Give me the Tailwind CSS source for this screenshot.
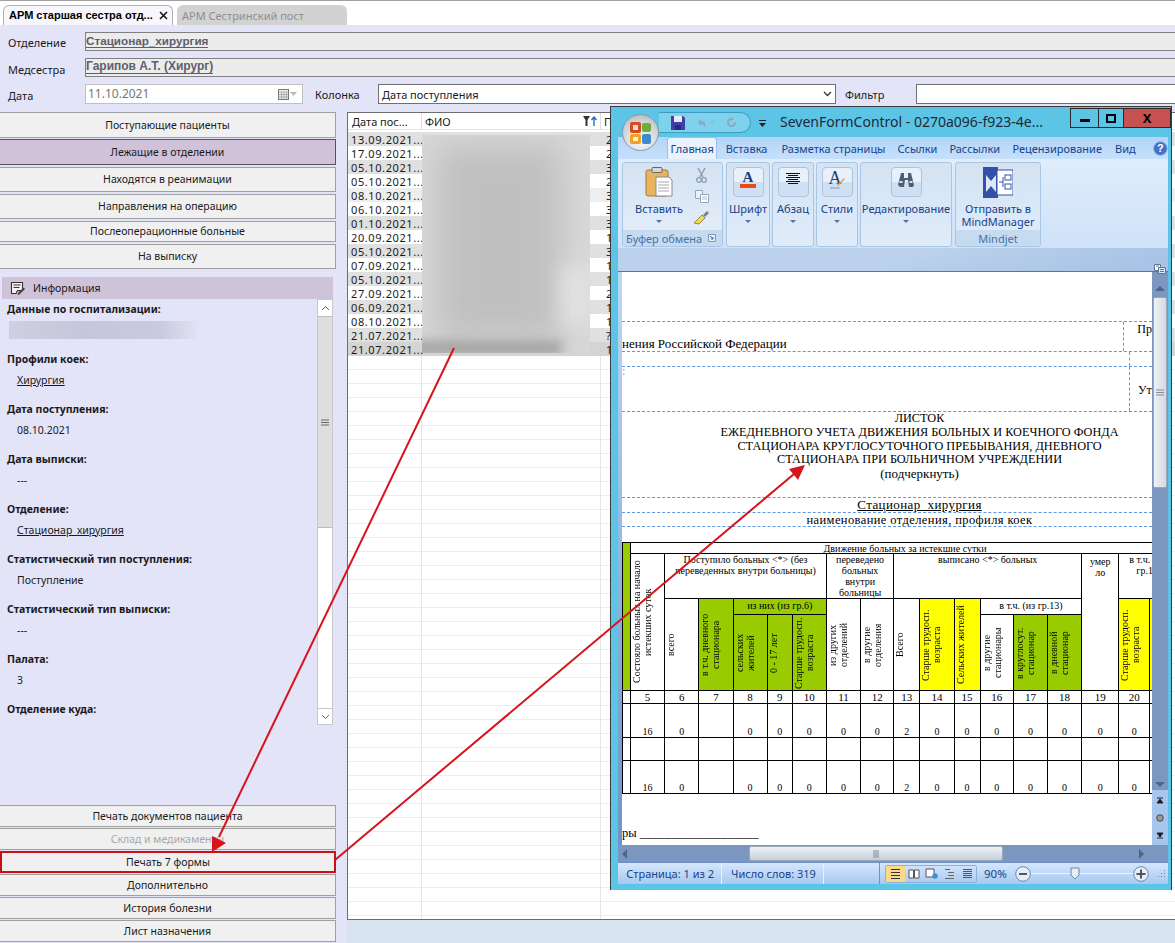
<!DOCTYPE html>
<html lang="ru"><head><meta charset="utf-8">
<script src="https://cdn.jsdelivr.net/npm/@tailwindcss/browser@4"></script>
<title>АРМ</title></head>
<body class="m-0">
<div class="relative flex h-[943px] w-[1175px] flex-col overflow-hidden bg-[#e4e4f8] font-['Noto_Sans',sans-serif] text-[11px] leading-none text-[#1a1a1a]">

  <!-- Tabs -->
  <div class="flex h-[25px] items-end gap-[4px] border-t border-[#a0a0a0] bg-white pl-[3px]">
    <div class="flex h-[20px] w-[170px] items-center whitespace-nowrap rounded-t-[6px] border border-b-0 border-[#b0b0b0] bg-[#f6f6fc] pl-[5px] font-['Liberation_Sans',sans-serif] text-[11px] font-bold text-black"><span class="w-[150px]">АРМ старшая сестра отд...</span><svg width="9" height="9" viewBox="0 0 9 9"><path d="M1 1l7 7M8 1l-7 7" stroke="#111" stroke-width="1.500"/></svg></div>
    <div class="flex h-[20px] w-[170px] items-center rounded-t-[6px] bg-[#d2d2d2] pl-[5px] text-[#8f8f8f]">АРМ Сестринский пост</div>
  </div>

  <!-- Fields -->
  <div class="flex flex-col gap-[7px] pt-[7px]">
    <div class="flex h-[19px] items-stretch">
      <div class="flex w-[85px] items-center pl-[8px] pt-[2px]">Отделение</div>
      <div class="flex-1 border border-r-0 border-[#808080] bg-[#ececec] font-['Liberation_Sans',sans-serif] text-[11.700px] font-bold text-[#5e5e6e]"><span class="border-b border-[#5e5e6e] leading-[15px]">Стационар_хирургия</span></div>
    </div>
    <div class="flex h-[19px] items-stretch">
      <div class="flex w-[85px] items-center pl-[8px] pt-[3px]">Медсестра</div>
      <div class="flex-1 border border-r-0 border-[#808080] bg-[#ececec] font-['Liberation_Sans',sans-serif] text-[12px] font-bold text-[#5e5e6e]"><span class="border-b border-[#5e5e6e] leading-[15px]">Гарипов А.Т. (Хирург)</span></div>
    </div>
    <div class="flex h-[20px] items-center">
      <div class="w-[85px] pl-[8px] pt-[2px]">Дата</div>
      <div class="flex h-[20px] w-[218px] items-center justify-between border border-[#c0c0c0] bg-white pl-[2px] pr-[5px] text-[12px] text-[#777]">11.10.2021
        <span class="flex items-center gap-[1px]"><svg width="11" height="11" viewBox="0 0 11 11"><rect x=".5" y=".5" width="10" height="10" fill="#eee" stroke="#777"/><path d="M1 3h9M3.500 3v7M6 3v7M8.500 3v7M1 5.500h9M1 8h9" stroke="#999" stroke-width=".7"/></svg><svg width="7" height="4" viewBox="0 0 7 4"><path d="M0 0h7L3.500 4z" fill="#bbb"/></svg></span>
      </div>
      <div class="w-[75px] pl-[12px]">Колонка</div>
      <div class="flex h-[20px] w-[458px] items-center justify-between border border-[#707070] bg-white pl-[3px] pr-[3px]">Дата поступления<svg width="9" height="6" viewBox="0 0 9 6"><path d="M1 1l3.500 3.500L8 1" fill="none" stroke="#333" stroke-width="1.300"/></svg></div>
      <div class="w-[80px] pl-[9px]">Фильтр</div>
      <div class="h-[20px] flex-1 border border-r-0 border-[#707070] bg-white"></div>
    </div>
  </div>

  <!-- Body -->
  <div class="mt-[8px] flex min-h-0 flex-1">
    <!-- Left column -->
    <div class="flex w-[336px] flex-col text-[10.500px]">
      <div class="flex h-[26px] items-center justify-center border border-l-0 border-[#a0a0a0] bg-[#f0f0f0]">Поступающие пациенты</div>
      <div class="mt-[1px] flex h-[26px] items-center justify-center border border-l-0 border-[#555] bg-[#cfc2d9]">Лежащие в отделении</div>
      <div class="mt-[2px] flex h-[25px] items-center justify-center border border-l-0 border-[#a0a0a0] bg-[#f0f0f0]">Находятся в реанимации</div>
      <div class="mt-[2px] flex h-[25px] items-center justify-center border border-l-0 border-[#a0a0a0] bg-[#f0f0f0]">Направления на операцию</div>
      <div class="mt-[2px] flex h-[21px] items-center justify-center border border-l-0 border-[#a0a0a0] bg-[#f0f0f0]">Послеоперационные больные</div>
      <div class="mt-[2px] flex h-[25px] items-center justify-center border border-l-0 border-[#a0a0a0] bg-[#f0f0f0]">На выписку</div>

      <div class="ml-[2px] mr-[3px] mt-[8px] flex h-[22px] items-center bg-[#cfc3da] pl-[8px]">
        <svg width="16" height="16" viewBox="0 0 16 16"><path d="M1.500 2.500h11v8h-5l-1.500 3h-4.500z" fill="#f4f2f7" stroke="#333" stroke-width="1.100"/><path d="M3.500 5h7M3.500 7.500h6" stroke="#333"/><path d="M8 13l5.500-5.500 1.500 1.500L9.500 14.500 7.500 15z" fill="#444"/></svg>
        <span class="ml-[7px]">Информация</span>
      </div>

      <div class="ml-[2px] mr-[3px] flex h-[506px]">
        <div class="flex-1 pl-[5px]">
          <div class="h-[50px]"><div class="flex h-[20px] items-center font-bold">Данные по госпитализации:</div><div class="mt-[2px] h-[18px] w-[191px] overflow-hidden pl-[2px]"><div class="h-full bg-[linear-gradient(90deg,#cfcfe2,#c6c6da_40%,#cacade_80%,#e2e2f5)]"></div></div></div>
          <div class="h-[50px]"><div class="flex h-[20px] items-center font-bold">Профили коек:</div><div class="mt-[1px] flex h-[20px] items-center pl-[10px] underline">Хирургия</div></div>
          <div class="h-[50px]"><div class="flex h-[20px] items-center font-bold">Дата поступления:</div><div class="mt-[1px] flex h-[20px] items-center pl-[10px]">08.10.2021</div></div>
          <div class="h-[50px]"><div class="flex h-[20px] items-center font-bold">Дата выписки:</div><div class="mt-[1px] flex h-[20px] items-center pl-[10px]">---</div></div>
          <div class="h-[50px]"><div class="flex h-[20px] items-center font-bold">Отделение:</div><div class="mt-[1px] flex h-[20px] items-center pl-[10px] underline">Стационар_хирургия</div></div>
          <div class="h-[50px]"><div class="flex h-[20px] items-center font-bold">Статистический тип поступления:</div><div class="mt-[1px] flex h-[20px] items-center pl-[10px]">Поступление</div></div>
          <div class="h-[50px]"><div class="flex h-[20px] items-center font-bold">Статистический тип выписки:</div><div class="mt-[1px] flex h-[20px] items-center pl-[10px]">---</div></div>
          <div class="h-[50px]"><div class="flex h-[20px] items-center font-bold">Палата:</div><div class="mt-[1px] flex h-[20px] items-center pl-[10px]">3</div></div>
          <div class="h-[50px]"><div class="flex h-[20px] items-center font-bold">Отделение куда:</div></div>
        </div>
        <div class="flex h-[426px] w-[16px] flex-col border border-[#c8c8c8] bg-white">
          <div class="flex h-[16px] items-center justify-center"><svg width="9" height="6" viewBox="0 0 9 6"><path d="M1 5l3.500-3.500L8 5" fill="none" stroke="#666"/></svg></div>
          <div class="flex h-[212px] items-center justify-center border-y border-[#bbb] bg-[#dedede]"><svg width="8" height="7" viewBox="0 0 8 7"><path d="M0 1h8M0 3.500h8M0 6h8" stroke="#666"/></svg></div>
          <div class="flex-1"></div>
          <div class="flex h-[16px] items-center justify-center border-t border-[#c8c8c8]"><svg width="9" height="6" viewBox="0 0 9 6"><path d="M1 1l3.500 3.500L8 1" fill="none" stroke="#666"/></svg></div>
        </div>
      </div>

      <div class="flex h-[22px] items-center justify-center border border-l-0 border-[#a0a0a0] bg-[#f0f0f0]">Печать документов пациента</div>
      <div class="mt-[1px] flex h-[22px] items-center justify-center border border-l-0 border-[#a0a0a0] bg-[#f0f0f0] text-[#a8a8a8]">Склад и медикаменты</div>
      <div class="mt-[1px] flex h-[22px] items-center justify-center border-[2px] border-[#cc0f14] bg-[#f0f0f0]">Печать 7 формы</div>
      <div class="mt-[1px] flex h-[22px] items-center justify-center border border-l-0 border-[#a0a0a0] bg-[#f0f0f0]">Дополнительно</div>
      <div class="mt-[1px] flex h-[22px] items-center justify-center border border-l-0 border-[#a0a0a0] bg-[#f0f0f0]">История болезни</div>
      <div class="mt-[1px] flex h-[22px] items-center justify-center border border-l-0 border-[#a0a0a0] bg-[#f0f0f0]">Лист назначения</div>
    </div>

    <!-- Right column -->
    <div class="ml-[11px] flex min-w-0 flex-1 flex-col">
      <div class="relative h-[808px] overflow-hidden border border-r-0 border-[#6e6e6e] bg-white">
        <div class="flex h-[17px] items-center border-b border-[#e6e6e6]">
          <div class="flex h-full w-[74px] items-center border-r border-[#ddd] pl-[4px]">Дата пос...</div>
          <div class="flex h-full w-[179px] items-center justify-between border-r border-[#ddd] pl-[3px] pr-[2px]">ФИО<svg width="15" height="10" viewBox="0 0 15 10"><path d="M0 0h7L4.500 4v6h-2V4z" fill="#333"/><path d="M11 10V1.500M8.500 4L11 1l2.500 3" fill="none" stroke="#2a6fb8" stroke-width="1.400"/></svg></div>
          <div class="pl-[3px]">П</div>
        </div>
        <div class="mt-[2px] flex h-[14px] items-center bg-[#e0e0e0]"><div class="w-[74px] pl-[3px] tracking-[0.6px]">13.09.2021...</div><div class="w-[179px]"></div><div class="pl-[5px]">2</div></div>
        <div class="flex h-[14px] items-center"><div class="w-[74px] pl-[3px] tracking-[0.6px]">17.09.2021...</div><div class="w-[179px]"></div><div class="pl-[5px]">2</div></div>
        <div class="flex h-[14px] items-center bg-[#e0e0e0]"><div class="w-[74px] pl-[3px] tracking-[0.6px]">05.10.2021...</div><div class="w-[179px]"></div><div class="pl-[5px]">3</div></div>
        <div class="flex h-[14px] items-center"><div class="w-[74px] pl-[3px] tracking-[0.6px]">05.10.2021...</div><div class="w-[179px]"></div><div class="pl-[5px]">2</div></div>
        <div class="flex h-[14px] items-center bg-[#eeeeee]"><div class="w-[74px] pl-[3px] tracking-[0.6px]">08.10.2021...</div><div class="w-[179px]"></div><div class="pl-[5px]">3</div></div>
        <div class="flex h-[14px] items-center"><div class="w-[74px] pl-[3px] tracking-[0.6px]">06.10.2021...</div><div class="w-[179px]"></div><div class="pl-[5px]">3</div></div>
        <div class="flex h-[14px] items-center bg-[#e0e0e0]"><div class="w-[74px] pl-[3px] tracking-[0.6px]">01.10.2021...</div><div class="w-[179px]"></div><div class="pl-[5px]">3</div></div>
        <div class="flex h-[14px] items-center"><div class="w-[74px] pl-[3px] tracking-[0.6px]">20.09.2021...</div><div class="w-[179px]"></div><div class="pl-[5px]">1</div></div>
        <div class="flex h-[14px] items-center bg-[#e0e0e0]"><div class="w-[74px] pl-[3px] tracking-[0.6px]">05.10.2021...</div><div class="w-[179px]"></div><div class="pl-[5px]">3</div></div>
        <div class="flex h-[14px] items-center"><div class="w-[74px] pl-[3px] tracking-[0.6px]">07.09.2021...</div><div class="w-[179px]"></div><div class="pl-[5px]">1</div></div>
        <div class="flex h-[14px] items-center bg-[#e0e0e0]"><div class="w-[74px] pl-[3px] tracking-[0.6px]">05.10.2021...</div><div class="w-[179px]"></div><div class="pl-[5px]">1</div></div>
        <div class="flex h-[14px] items-center"><div class="w-[74px] pl-[3px] tracking-[0.6px]">27.09.2021...</div><div class="w-[179px]"></div><div class="pl-[5px]">2</div></div>
        <div class="flex h-[14px] items-center bg-[#e0e0e0]"><div class="w-[74px] pl-[3px] tracking-[0.6px]">06.09.2021...</div><div class="w-[179px]"></div><div class="pl-[5px]">1</div></div>
        <div class="flex h-[14px] items-center"><div class="w-[74px] pl-[3px] tracking-[0.6px]">08.10.2021...</div><div class="w-[179px]"></div><div class="pl-[5px]">1</div></div>
        <div class="flex h-[14px] items-center bg-[#e0e0e0]"><div class="w-[74px] pl-[3px] tracking-[0.6px]">21.07.2021...</div><div class="w-[179px]"></div><div class="pl-[5px]">?</div></div>
        <div class="flex h-[14px] items-center bg-[#d4d4d4]"><div class="w-[74px] pl-[3px] tracking-[0.6px]">21.07.2021...</div><div class="w-[179px]"></div><div class="pl-[5px]">1</div></div>
        <!-- empty rows -->
        <div class="flex h-[570px] bg-[repeating-linear-gradient(180deg,#ffffff_0,#ffffff_13px,#ececec_13px,#ececec_14px)]"><div class="w-[74px] border-r border-[#e6e6e6]"></div><div class="w-[179px] border-r border-[#e6e6e6]"></div></div>

        <!-- blurred names (redacted in the reference) -->
        <div class="absolute left-[74px] top-[22px] h-[218px] w-[168px] overflow-hidden bg-[#d8d8d8]">
          <div class="absolute left-[15px] top-[10px] h-[195px] w-[125px] bg-[#c0c0c0] blur-[16px]"></div>
          <div class="absolute left-[140px] top-[130px] h-[60px] w-[30px] bg-[#e2e2e2] blur-[10px]"></div>
          <div class="absolute left-[-10px] top-[206px] h-[14px] w-[150px] bg-[#a0a0a0] blur-[6px]"></div>
        </div>
      </div>
      <div class="flex-1 bg-[#d8e4f0]"></div>
    </div>
  </div>

  <!-- Word window -->
  <div class="absolute left-[610px] top-[106px] flex h-[784px] w-[562px] flex-col border border-b-0 border-[#3a3a3a] bg-[#5cc5e6]">
    <!-- title -->
    <div class="flex h-[30px] items-start">
      <div class="ml-[48px] mt-[5px] flex h-[21px] w-[92px] items-center rounded-r-[11px] border border-l-0 border-[#3f9dc4] bg-[#7fd2ec] pl-[12px]">
        <svg width="14" height="14" viewBox="0 0 14 14"><path d="M0 0h12l2 2v12H0z" fill="#3f3fa6"/><rect x="3" y="0" width="8" height="6" fill="#e8e8f8"/><rect x="4" y="9" width="6" height="5" fill="#2b2b70"/></svg>
        <svg class="ml-[10px]" width="12" height="12" viewBox="0 0 12 12"><path d="M3 5l3-3v2c4 0 5 3 4 7-1-3-2-4-4-4v2z" fill="#8aa8c0"/></svg>
        <svg class="ml-[3px]" width="5" height="3" viewBox="0 0 5 3"><path d="M0 0h5L2.500 3z" fill="#9ab8cc"/></svg>
        <svg class="ml-[11px]" width="11" height="11" viewBox="0 0 11 11"><path d="M9 5.500A3.500 3.500 0 1 1 5.500 2" fill="none" stroke="#8aa8c0" stroke-width="2"/><path d="M5 0l3 2-3 2z" fill="#8aa8c0"/></svg>
      </div>
      <svg class="ml-[8px] mt-[13px]" width="7" height="7" viewBox="0 0 7 7"><path d="M0 0h7v1H0zM0 3h7L3.500 7z" fill="#222"/></svg>
      <div class="ml-[14px] mt-[5px] w-[285px] whitespace-nowrap text-[14px] leading-[20px] text-[#1c2a38]">SevenFormControl - 0270a096-f923-4e...</div>
      <div class="ml-auto mr-[0px] mt-[1px] flex h-[20px] border border-[#2a2a2a]">
        <div class="flex w-[28px] items-center justify-center border-r border-[#2a2a2a]"><div class="mt-[5px] h-[3px] w-[10px] bg-black"></div></div>
        <div class="flex w-[25px] items-center justify-center border-r border-[#2a2a2a]"><div class="h-[9px] w-[10px] border-[2px] border-black"></div></div>
        <div class="flex w-[46px] items-center justify-center bg-[#c75050] text-[13px] font-bold text-black">X</div>
      </div>
    </div>
    <!-- ribbon tabs -->
    <div class="ml-[7px] mr-[3px] flex h-[22px] items-center bg-[linear-gradient(180deg,#b3d5f8,#c6e0fb)] text-[#15428b]">
      <div class="ml-[49px] flex h-[22px] w-[51px] items-center justify-center rounded-t-[3px] border border-b-0 border-[#9cc0e8] bg-[#eaf3fd]">Главная</div>
      <div class="flex w-[59px] justify-center">Вставка</div>
      <div class="w-[117px] text-center">Разметка страницы</div>
      <div class="w-[53px] text-center">Ссылки</div>
      <div class="w-[63px] text-center">Рассылки</div>
      <div class="w-[104px] text-center">Рецензирование</div>
      <div class="w-[34px] text-center">Вид</div>
      <svg class="ml-[11px]" width="15" height="15" viewBox="0 0 15 15"><circle cx="7.500" cy="7.500" r="7" fill="#3f73c4" stroke="#9fc0ea"/><text x="7.500" y="11.500" text-anchor="middle" font-size="11" font-weight="700" fill="#fff" font-family="Liberation Sans">?</text></svg>
    </div>
    <!-- ribbon -->
    <div class="ml-[7px] mr-[3px] flex h-[89px] gap-[2px] bg-[linear-gradient(180deg,#dfedfc,#cfe2f8)] px-[4px] pb-[1px] pt-[3px] text-[#15428b]">
      <div class="relative mr-[1px] flex w-[101px] flex-col overflow-hidden rounded-[3px] border border-[#a9c6e4] bg-[linear-gradient(180deg,#d4e2f2,#e6effa)]">
        <div class="flex flex-1">
          <div class="flex w-[70px] flex-col items-center pl-[2px] pt-[4px]">
            <svg width="28" height="30" viewBox="0 0 28 30"><rect x="1" y="3" width="22" height="26" rx="2" fill="#e9b45f" stroke="#a6793a"/><rect x="7" y="0.500" width="10" height="5" rx="1" fill="#d8d8d8" stroke="#666"/><path d="M11 10h13l3 3v16H11z" fill="#fff" stroke="#8a8a8a"/><path d="M13 15h11M13 18h11M13 21h11M13 24h11" stroke="#aaa"/></svg>
            <div class="mt-[6px]">Вставить</div>
            <svg class="mt-[6px]" width="6" height="3" viewBox="0 0 6 3"><path d="M0 0h6L3 3z" fill="#5573a0"/></svg>
          </div>
          <div class="flex flex-col items-center gap-[7px] pt-[5px]">
            <svg width="11" height="15" viewBox="0 0 11 15"><path d="M2 0l5 9M9 0L4 9" stroke="#8f9fb2" stroke-width="1.500"/><circle cx="3" cy="12" r="2.300" fill="none" stroke="#8f9fb2" stroke-width="1.300"/><circle cx="8" cy="12" r="2.300" fill="none" stroke="#8f9fb2" stroke-width="1.300"/></svg>
            <svg width="14" height="13" viewBox="0 0 14 13"><path d="M.5.500h7v8h-7z" fill="#eef2f6" stroke="#98a6b6"/><path d="M5.500 4.500h8v8h-8z" fill="#fff" stroke="#98a6b6"/><path d="M7 7h5M7 9h5" stroke="#b0bcca"/></svg>
            <svg width="17" height="15" viewBox="0 0 17 15"><path d="M1 13L9 5l3 3-6 6z" fill="#f0d860" stroke="#9a8a40"/><path d="M10 5l4-4 2 2-4 4z" fill="#7b7b9c"/></svg>
          </div>
        </div>
        <div class="flex h-[16px] items-center justify-between bg-[#c6daf0] pl-[3px] pr-[6px] text-[#4a72a8]">Буфер обмена<svg width="8" height="8" viewBox="0 0 8 8"><path d="M.5.500h7v7h-7z" fill="#e8f0fa" stroke="#7a9ac0"/><path d="M2 2l3 3M5 3v2H3" stroke="#49678f" fill="none"/></svg></div>
      </div>
      <div class="flex w-[44px] flex-col items-center rounded-[3px] border border-[#a9c6e4] bg-[linear-gradient(180deg,#d4e2f2,#e0ecfa)] pt-[4px]">
        <div class="flex h-[30px] w-[31px] items-start justify-center rounded-[4px] border border-[#aec4de] bg-[linear-gradient(180deg,#e8f0fa_50%,#cfe0f2_50%)] pt-[2px]"><svg width="16" height="20" viewBox="0 0 16 20"><text x="8" y="12" text-anchor="middle" font-family="Liberation Serif" font-size="15" font-weight="700" fill="#1d3f77">A</text><rect x="0" y="14" width="16" height="4" fill="#ea4a14"/></svg></div>
        <div class="mt-[6px]">Шрифт</div>
        <svg class="mt-[6px]" width="6" height="3" viewBox="0 0 6 3"><path d="M0 0h6L3 3z" fill="#5573a0"/></svg>
      </div>
      <div class="flex w-[42px] flex-col items-center rounded-[3px] border border-[#a9c6e4] bg-[linear-gradient(180deg,#d4e2f2,#e0ecfa)] pt-[4px]">
        <div class="flex h-[30px] w-[31px] items-start justify-center rounded-[4px] border border-[#aec4de] bg-[linear-gradient(180deg,#e8f0fa_50%,#cfe0f2_50%)] pt-[5px]"><svg width="14" height="11" viewBox="0 0 14 11"><path d="M0 .500h14M2 2.500h10M0 4.500h14M2 6.500h10M0 8.500h14M2 10.500h10" stroke="#111"/></svg></div>
        <div class="mt-[6px]">Абзац</div>
        <svg class="mt-[6px]" width="6" height="3" viewBox="0 0 6 3"><path d="M0 0h6L3 3z" fill="#5573a0"/></svg>
      </div>
      <div class="flex w-[42px] flex-col items-center rounded-[3px] border border-[#a9c6e4] bg-[linear-gradient(180deg,#d4e2f2,#e0ecfa)] pt-[4px]">
        <div class="flex h-[30px] w-[31px] items-start justify-center rounded-[4px] border border-[#aec4de] bg-[linear-gradient(180deg,#e8f0fa_50%,#cfe0f2_50%)] pt-[2px]"><svg width="18" height="20" viewBox="0 0 18 20"><text x="7" y="14" text-anchor="middle" font-family="Liberation Serif" font-size="18" fill="#1d3f77">A</text><path d="M9 15l7-7 1 1-7 7z" fill="#d9a72b"/><path d="M2 18h10" stroke="#7a9ad0"/></svg></div>
        <div class="mt-[6px]">Стили</div>
        <svg class="mt-[6px]" width="6" height="3" viewBox="0 0 6 3"><path d="M0 0h6L3 3z" fill="#5573a0"/></svg>
      </div>
      <div class="mr-[1px] flex w-[92px] flex-col items-center rounded-[3px] border border-[#a9c6e4] bg-[linear-gradient(180deg,#d4e2f2,#e0ecfa)] pt-[4px]">
        <div class="flex h-[30px] w-[31px] items-start justify-center rounded-[4px] border border-[#aec4de] bg-[linear-gradient(180deg,#e8f0fa_50%,#cfe0f2_50%)] pt-[5px]"><svg width="16" height="14" viewBox="0 0 16 14"><path d="M3 0h3v5h4V0h3l3 12-1 2h-4l-1-7H7l-1 7H2l-2-2z" fill="#4d5e76"/><path d="M1.500 9h3M11.500 9h3" stroke="#dde" stroke-width="2"/></svg></div>
        <div class="mt-[6px]">Редактирование</div>
        <svg class="mt-[6px]" width="6" height="3" viewBox="0 0 6 3"><path d="M0 0h6L3 3z" fill="#5573a0"/></svg>
      </div>
      <div class="flex w-[86px] flex-col items-center overflow-hidden rounded-[3px] border border-[#a9c6e4] bg-[linear-gradient(180deg,#d4e2f2,#e0ecfa)] pt-[4px]">
        <svg width="30" height="31" viewBox="0 0 30 31"><rect width="15" height="31" fill="#3350a8"/><rect x="14" y="3" width="16" height="25" fill="#fff" stroke="#3350a8"/><path d="M3 8l5 6 5-6v17l-5-6-5 6z" fill="#dfe6f8"/><rect x="22" y="8" width="6" height="5" fill="none" stroke="#3350a8"/><rect x="22" y="17" width="6" height="5" fill="none" stroke="#3350a8"/><path d="M16 15h4M20 10v10" stroke="#3350a8"/></svg>
        <div class="mt-[4px] h-[13px] leading-[13px]">Отправить в</div>
        <div class="h-[13px] leading-[13px]">MindManager</div>
        <div class="mt-auto flex h-[16px] w-full items-center justify-center bg-[#c6daf0] text-[#4a72a8]">Mindjet</div>
      </div>
    </div>
    <!-- band -->
    <div class="relative z-10 ml-[7px] mr-[3px] flex h-[24px] flex-col items-end border-b border-[#5d7696] bg-[linear-gradient(165deg,#bcd2ec_50%,#a9c4e6_90%)]">
      <div class="mr-[4px] mt-[7px] h-[3px] w-[8px] bg-[#51657e]"></div>
      <svg class="mr-[2px] mt-[7px] shrink-0" width="12" height="12" viewBox="0 0 12 12"><path d="M.5 2.500h6v6h-6z" fill="#fff" stroke="#5d7696"/><path d="M4.500 5.500h7v6h-7z" fill="#dfe8f4" stroke="#5d7696"/><path d="M2 4h3M6 7.500h4M6 9.500h4" stroke="#5d7696"/></svg>
    </div>
    <!-- Document + scrollbar -->
    <div class="ml-[7px] mr-[3px] flex h-[573px] bg-[#7b97c0]">
      <div class="w-[4px] bg-[linear-gradient(180deg,#bcd8f8,#6f93c8)]"></div>
      <div class="relative w-[531px] overflow-hidden bg-white font-['Liberation_Serif',serif] text-[12px] text-black">
        <div class="h-[49px]"></div>
        <div class="flex h-[30px] border-t border-dashed border-[#5f97e0]"><div class="flex w-[507px] items-end whitespace-nowrap pb-[1px] text-[13px]">нения Российской Федерации</div><div class="flex-1 whitespace-nowrap border-l border-dashed border-[#5f97e0] pl-[13px] pt-[1px]">Пр</div></div>
        <div class="flex h-[15px] border-t border-dashed border-[#5f97e0]"><div class="w-[507px]"></div><div class="flex-1 border-l border-dashed border-[#5f97e0]"></div></div>
        <div class="flex h-[45px] border-t border-dashed border-[#5f97e0]"><div class="w-[507px] pl-0 leading-[8px] text-[#5f97e0]">:</div><div class="flex flex-1 items-end whitespace-nowrap border-l border-dashed border-[#5f97e0] pb-[15px] pl-[8px]">Ут</div></div>
        <div class="h-[86px] border-t border-dashed border-[#5f97e0] text-center text-[12.250px]">
          <div class="h-[13px] pl-[65px] leading-[13px]">ЛИСТОК</div>
          <div class="h-[14px] pl-[65px] leading-[14px]">ЕЖЕДНЕВНОГО УЧЕТА ДВИЖЕНИЯ БОЛЬНЫХ И КОЕЧНОГО ФОНДА</div>
          <div class="h-[14px] pl-[65px] leading-[14px]">СТАЦИОНАРА КРУГЛОСУТОЧНОГО ПРЕБЫВАНИЯ, ДНЕВНОГО</div>
          <div class="h-[13px] pl-[65px] leading-[13px]">СТАЦИОНАРА ПРИ БОЛЬНИЧНОМ УЧРЕЖДЕНИИ</div>
          <div class="mt-[1px] pl-[65px] text-[13px] leading-[14px]">(подчеркнуть)</div>
        </div>
        <div class="h-[15px] border-t border-dashed border-[#5f97e0] pl-[65px] text-center text-[13px] leading-[14px] tracking-[0.4px]"><span class="underline">Стационар_хирургия</span></div>
        <div class="h-[14px] border-t border-dashed border-[#5f97e0] pl-[65px] text-center text-[12.500px] leading-[14px] tracking-[0.4px]">наименование отделения, профиля коек</div>
        <div class="h-[16px] border-t border-dashed border-[#5f97e0]"></div>

        <table class="w-[562px] table-fixed border-collapse text-[10px] leading-[11px] [&_td]:overflow-hidden [&_td]:border [&_td]:border-black [&_td]:p-0 [&_td]:text-center">
          <colgroup><col class="w-[8px]"><col class="w-[34px]"><col class="w-[34px]"><col class="w-[34px]"><col class="w-[34px]"><col class="w-[25px]"><col class="w-[34px]"><col class="w-[34px]"><col class="w-[33px]"><col class="w-[26px]"><col class="w-[34px]"><col class="w-[26px]"><col class="w-[33px]"><col class="w-[34px]"><col class="w-[34px]"><col class="w-[37px]"><col class="w-[31px]"><col class="w-[33px]"></colgroup>
          <tbody>
            <tr class="h-[11px]"><td rowspan="4" class="bg-[#99cc00]"></td><td colspan="17"><div class="h-[10px] pr-[4px] leading-[11px]">Движение больных за истекшие сутки</div></td></tr>
            <tr class="h-[45px]">
              <td rowspan="3"><div class="mx-auto h-[132px] rotate-180 [writing-mode:vertical-rl]">Состояло больных на начало истекших суток</div></td>
              <td colspan="5" class="align-top"><div class="h-[43px] px-[3px]">Поступило больных &lt;*&gt; (без переведенных внутри больницы)</div></td>
              <td colspan="2" class="align-top"><div class="h-[43px] leading-[11px]">переведено больных внутри больницы</div></td>
              <td colspan="6" class="align-top">выписано &lt;*&gt;  больных</td>
              <td rowspan="3" class="align-top"><div class="pt-[2px]">умер<br>ло</div></td>
              <td colspan="2" class="align-top"><div class="whitespace-nowrap pl-[10px] text-left">в т.ч. (из</div><div class="pl-[17px] text-left">гр.19</div></td>
            </tr>
            <tr class="h-[16px]">
              <td rowspan="2"><div class="mx-auto h-[88px] rotate-180 [writing-mode:vertical-rl]">всего</div></td>
              <td rowspan="2" class="bg-[#99cc00]"><div class="mx-auto h-[88px] rotate-180 [writing-mode:vertical-rl]">в т.ч. дневного стационара</div></td>
              <td colspan="3" class="bg-[#99cc00]"><div class="h-[15px] leading-[13px]">из них (из гр.6)</div></td>
              <td rowspan="2"><div class="mx-auto h-[60px] rotate-180 [writing-mode:vertical-rl]">из других отделений</div></td>
              <td rowspan="2"><div class="mx-auto h-[60px] rotate-180 [writing-mode:vertical-rl]">в другие отделения</div></td>
              <td rowspan="2"><div class="mx-auto h-[88px] rotate-180 [writing-mode:vertical-rl]">Всего</div></td>
              <td rowspan="2" class="bg-[#ffff00]"><div class="mx-auto h-[88px] rotate-180 [writing-mode:vertical-rl]">Старше трудосп. возраста</div></td>
              <td rowspan="2" class="bg-[#ffff00]"><div class="mx-auto h-[88px] rotate-180 [writing-mode:vertical-rl]">Сельских жителей</div></td>
              <td colspan="3"><div class="h-[15px] leading-[13px]">в т.ч. (из гр.13)</div></td>
              <td rowspan="2" class="bg-[#ffff00]"><div class="mx-auto h-[88px] rotate-180 [writing-mode:vertical-rl]">Старше трудосп. возраста</div></td>
              <td rowspan="2" class="bg-[#ffff00]"></td>
            </tr>
            <tr class="h-[76px]">
              <td class="bg-[#99cc00]"><div class="mx-auto h-[74px] rotate-180 [writing-mode:vertical-rl]">сельских жителей</div></td>
              <td class="bg-[#99cc00]"><div class="mx-auto h-[74px] rotate-180 [writing-mode:vertical-rl]">0 - 17 лет</div></td>
              <td class="bg-[#99cc00]"><div class="mx-auto h-[74px] rotate-180 [writing-mode:vertical-rl]">Старше трудосп. возраста</div></td>
              <td><div class="mx-auto h-[74px] rotate-180 [writing-mode:vertical-rl]">в другие стационары</div></td>
              <td class="bg-[#99cc00]"><div class="mx-auto h-[74px] rotate-180 [writing-mode:vertical-rl]">в круглосут. стационар</div></td>
              <td class="bg-[#99cc00]"><div class="mx-auto h-[74px] rotate-180 [writing-mode:vertical-rl]">в дневной стационар</div></td>
            </tr>
            <tr class="h-[13px] text-[11px] leading-[12px]"><td></td><td>5</td><td>6</td><td>7</td><td>8</td><td>9</td><td>10</td><td>11</td><td>12</td><td>13</td><td>14</td><td>15</td><td>16</td><td>17</td><td>18</td><td>19</td><td>20</td><td></td></tr>
            <tr class="h-[34px] [&_td]:align-bottom"><td></td><td>16</td><td>0</td><td></td><td>0</td><td>0</td><td>0</td><td>0</td><td>0</td><td>2</td><td>0</td><td>0</td><td>0</td><td>0</td><td>0</td><td>0</td><td>0</td><td></td></tr>
            <tr class="h-[23px]"><td></td><td></td><td></td><td></td><td></td><td></td><td></td><td></td><td></td><td></td><td></td><td></td><td></td><td></td><td></td><td></td><td></td><td></td></tr>
            <tr class="h-[33px] [&_td]:align-bottom"><td></td><td>16</td><td>0</td><td></td><td>0</td><td>0</td><td>0</td><td>0</td><td>0</td><td>2</td><td>0</td><td>0</td><td>0</td><td>0</td><td>0</td><td>0</td><td>0</td><td></td></tr>
          </tbody>
        </table>
        <div class="mt-[32px] whitespace-nowrap text-[12.500px] leading-[14px]">ры ___________________</div>
      </div>
      <!-- vertical scrollbar -->
      <div class="flex w-[16px] flex-col items-center">
        <div class="flex h-[25px] w-full items-center justify-center pt-[7px]"><svg width="10" height="5" viewBox="0 0 10 5"><path d="M5 0l5 5H0z" fill="#4d6688"/></svg></div>
        <div class="flex h-[191px] w-[14px] items-center justify-center rounded-[2px] border border-[#9aa8ba] bg-[linear-gradient(90deg,#eef1f5,#d4dae3)]"><svg width="8" height="7" viewBox="0 0 8 7"><path d="M0 1h8M0 3.500h8M0 6h8" stroke="#7d8a9a"/></svg></div>
        <div class="flex flex-1 items-end justify-center pb-[3px]"><svg width="10" height="5" viewBox="0 0 10 5"><path d="M0 0h10L5 5z" fill="#4d6688"/></svg></div>
        <div class="flex h-[55px] w-full flex-col items-center gap-[9px] bg-[#a6c6ee] pt-[7px]">
          <svg width="8" height="8" viewBox="0 0 8 8"><path d="M1 1h6M4 2L1 6h6z" stroke="#222" fill="#222"/></svg>
          <svg width="8" height="8" viewBox="0 0 8 8"><circle cx="4" cy="4" r="3.300" fill="#999" stroke="#333" stroke-width=".8"/></svg>
          <svg width="8" height="8" viewBox="0 0 8 8"><path d="M1 7h6M1 2h6L4 6z" stroke="#222" fill="#222"/></svg>
        </div>
      </div>
    </div>
    <!-- horizontal scrollbar -->
    <div class="ml-[7px] mr-[3px] flex h-[17px] items-center bg-[#7b97c0]">
      <svg class="ml-[4px]" width="5" height="10" viewBox="0 0 5 10"><path d="M5 0v10L0 5z" fill="#4d6688"/></svg>
      <div class="ml-[122px] flex h-[15px] w-[254px] items-center justify-center rounded-[2px] border border-[#9aa8ba] bg-[linear-gradient(180deg,#eef1f5,#c8d0dc)]"><svg width="7" height="8" viewBox="0 0 7 8"><path d="M1 0v8M3 0v8M5 0v8" stroke="#7d8a9a"/></svg></div>
      <svg class="ml-[136px]" width="5" height="10" viewBox="0 0 5 10"><path d="M0 0v10l5-5z" fill="#4d6688"/></svg>
    </div>
    <!-- status bar -->
    <div class="ml-[7px] mr-[3px] flex h-[22px] items-center border-t border-[#6f92c4] bg-[linear-gradient(180deg,#d5e7fc,#a7c8f0)] text-[#15428b]">
      <div class="flex h-full w-[104px] items-center justify-end border-r border-[#e8f2ff] pr-[7px]">Страница: 1 из 2</div>
      <div class="flex h-full w-[102px] items-center justify-center border-r border-[#e8f2ff] pl-[2px]">Число слов: 319</div>
      <div class="h-full w-[56px] border-r border-[#6f92c4]"></div>
      <div class="ml-[5px] flex h-[18px] w-[92px] overflow-hidden rounded-[2px] border border-[#8fb0d8]">
        <div class="flex w-[19px] items-center justify-center bg-[#fbd88a]"><svg width="11" height="10" viewBox="0 0 11 10"><path d="M1 .500h9M1 3.500h9M1 6.500h9M1 9.500h9" stroke="#333"/></svg></div>
        <div class="flex w-[18px] items-center justify-center"><svg width="12" height="10" viewBox="0 0 12 10"><path d="M1 1h4.500v8H1zM6.500 1H11v8H6.500z" fill="#fff" stroke="#555"/></svg></div>
        <div class="flex w-[18px] items-center justify-center"><svg width="13" height="11" viewBox="0 0 13 11"><path d="M1 1h8v8H1z" fill="#fff" stroke="#555"/><circle cx="10" cy="8" r="2.700" fill="#3f8fcf"/></svg></div>
        <div class="flex w-[18px] items-center justify-center"><svg width="11" height="10" viewBox="0 0 11 10"><path d="M1 .500h5M4 3.500h6M4 6.500h6M1 9.500h9" stroke="#666"/></svg></div>
        <div class="flex w-[18px] items-center justify-center"><svg width="11" height="10" viewBox="0 0 11 10"><path d="M1 .500h9M1 2.500h9M1 4.500h9M1 6.500h9M1 8.500h9" stroke="#555"/></svg></div>
      </div>
      <div class="ml-[7px] text-[11.500px]">90%</div>
      <svg class="ml-[8px]" width="16" height="16" viewBox="0 0 16 16"><circle cx="8" cy="8" r="7.300" fill="#e4eefb" stroke="#6f88a8"/><path d="M4 8h8" stroke="#555" stroke-width="2"/></svg>
      <div class="relative h-[1px] w-[102px] bg-[#eef5ff]"><svg class="absolute left-[39px] top-[-6px]" width="10" height="13" viewBox="0 0 10 13"><path d="M1 1h8v7l-4 4-4-4z" fill="#e8eef6" stroke="#6f88a8"/></svg></div>
      <svg width="16" height="16" viewBox="0 0 16 16"><circle cx="8" cy="8" r="7.300" fill="#e4eefb" stroke="#6f88a8"/><path d="M3.500 8h9M8 3.500v9" stroke="#555" stroke-width="2"/></svg>
      <svg class="ml-[8px]" width="9" height="9" viewBox="0 0 9 9"><path d="M7 1h1v1H7zM7 4h1v1H7zM7 7h1v1H7zM4 4h1v1H4zM4 7h1v1H4zM1 7h1v1H1z" fill="#6f88a8"/></svg>
    </div>
    <!-- Office button -->
    <div class="absolute left-[11px] top-[7px] flex size-[37px] items-center justify-center rounded-full border border-[#8a9aa8] bg-[radial-gradient(circle_at_50%_70%,#ffffff,#c8ccd0_70%,#9aa2a8)]">
      <svg width="24" height="24" viewBox="0 0 24 24"><rect x="1" y="1" width="11" height="11" rx="2" fill="#d94a1f"/><rect x="13" y="2" width="9" height="9" rx="2" fill="#6cae3b"/><rect x="1" y="13" width="11" height="10" rx="2" fill="#f0a31f"/><rect x="13" y="13" width="9" height="10" rx="2" fill="#3c8ad0"/><rect x="4" y="4" width="5" height="5" fill="#fff" opacity=".8"/><rect x="4" y="16" width="5" height="4" fill="#fff" opacity=".8"/></svg>
    </div>
  </div>

  <!-- Red arrows -->
  <svg class="absolute left-0 top-0" width="1175" height="943" viewBox="0 0 1175 943" fill="none">
    <path d="M454 348L219 837" stroke="#d7141a" stroke-width="2"/>
    <path d="M212 852l0-16 14 7z" fill="#d7141a"/>
    <path d="M335 860L794 474" stroke="#d7141a" stroke-width="2"/>
    <path d="M805 465l-7 15-9-11z" fill="#d7141a"/>
  </svg>
</div>
</body></html>
